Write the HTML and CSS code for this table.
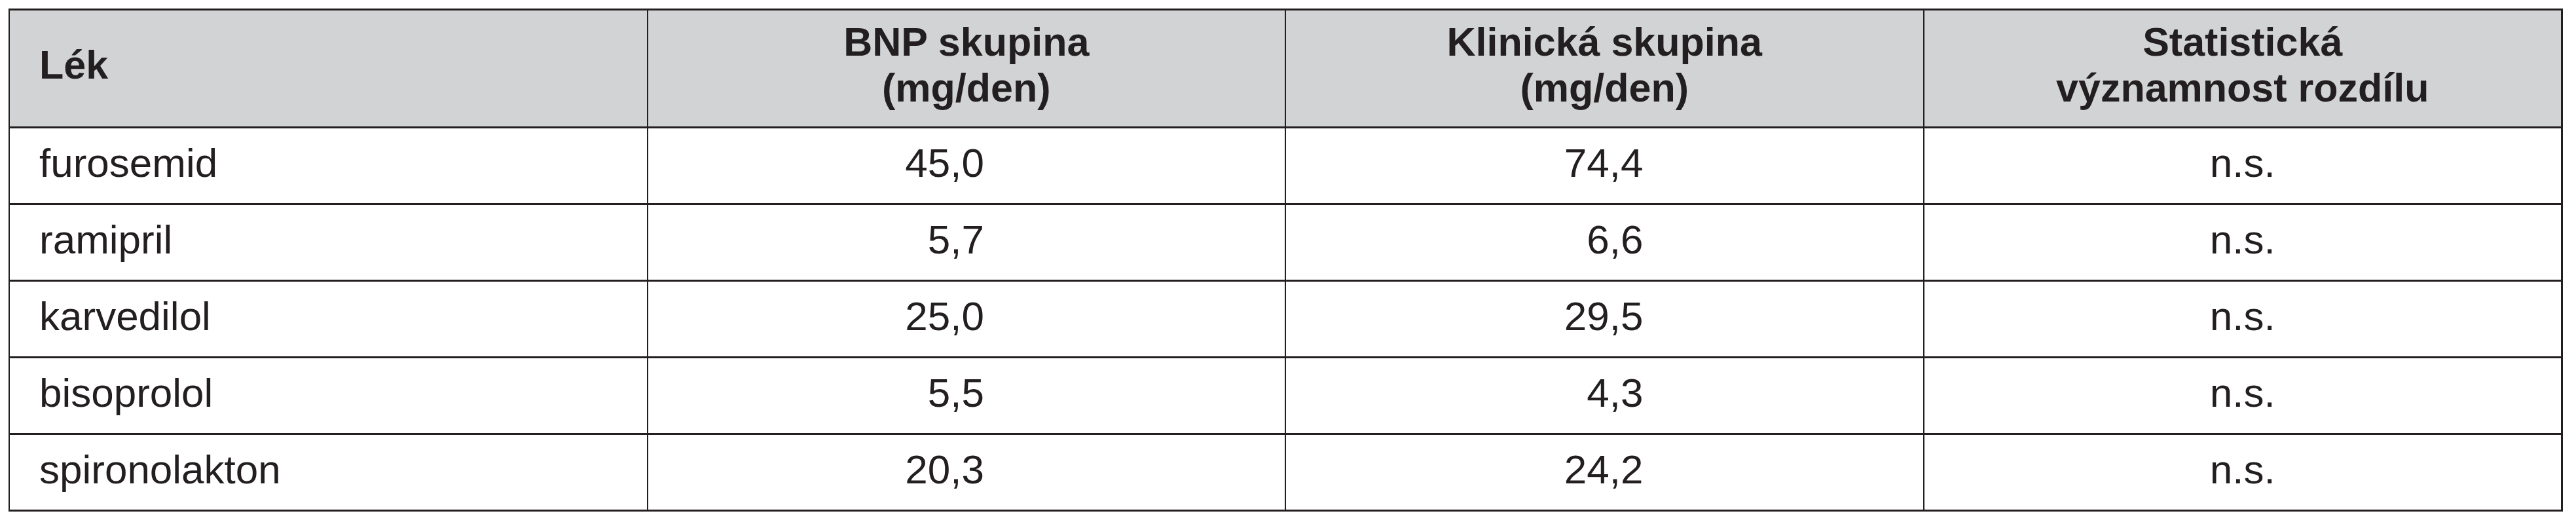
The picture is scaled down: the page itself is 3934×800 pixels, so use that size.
FILE: index.html
```html
<!DOCTYPE html>
<html lang="cs">
<head>
<meta charset="utf-8">
<title>Tabulka</title>
<link rel="stylesheet" href="styles.css">
</head>
<body>
<div class="table" role="table">
  <div class="cell head first" role="columnheader">Lék</div>
  <div class="cell head" role="columnheader">BNP skupina<br>(mg/den)</div>
  <div class="cell head" role="columnheader">Klinická skupina<br>(mg/den)</div>
  <div class="cell head" role="columnheader">Statistická<br>významnost rozdílu</div>

  <div class="cell first">furosemid</div>
  <div class="cell num bnp">45,0</div>
  <div class="cell num klin">74,4</div>
  <div class="cell sig">n.s.</div>

  <div class="cell first">ramipril</div>
  <div class="cell num bnp">5,7</div>
  <div class="cell num klin">6,6</div>
  <div class="cell sig">n.s.</div>

  <div class="cell first">karvedilol</div>
  <div class="cell num bnp">25,0</div>
  <div class="cell num klin">29,5</div>
  <div class="cell sig">n.s.</div>

  <div class="cell first">bisoprolol</div>
  <div class="cell num bnp">5,5</div>
  <div class="cell num klin">4,3</div>
  <div class="cell sig">n.s.</div>

  <div class="cell first">spironolakton</div>
  <div class="cell num bnp">20,3</div>
  <div class="cell num klin">24,2</div>
  <div class="cell sig">n.s.</div>
</div>
</body>
</html>
```
FILE: styles.css
```css
html, body {
  margin: 0;
  padding: 0;
  background: #ffffff;
}

body {
  padding: 13px 0 0 13px;
  font-family: "Liberation Sans", Arial, sans-serif;
  color: #231f20;
}

.table {
  width: 3901px;
  box-sizing: border-box;
  display: grid;
  grid-template-columns: repeat(4, 1fr);
  grid-template-rows: 177px repeat(5, 114px);
  row-gap: 3px;
  column-gap: 2px;
  padding: 3px 3px 3px 2px;
  background: #231f20;
}

.cell {
  background: #ffffff;
  display: flex;
  align-items: center;
  justify-content: center;
  text-align: center;
  font-size: 62px;
  line-height: 70px;
  padding-bottom: 9px;
  box-sizing: border-box;
}

.head {
  background: #d1d3d4;
  font-weight: bold;
  font-size: 61px;
  padding-bottom: 12px;
}

.first {
  justify-content: flex-start;
  text-align: left;
  padding-left: 45px;
}

.num {
  justify-content: flex-end;
  text-align: right;
}

.bnp {
  padding-right: 459px;
}

.klin {
  padding-right: 427px;
}
```
